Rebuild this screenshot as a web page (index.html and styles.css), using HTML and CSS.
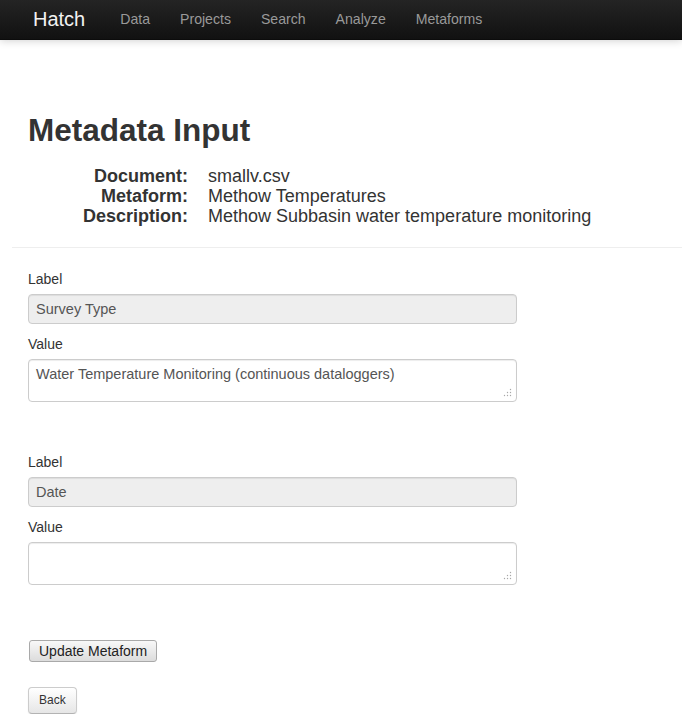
FILE: index.html
```html
<!DOCTYPE html>
<html>
<head>
<meta charset="utf-8">
<title>Hatch - Metadata Input</title>
<link rel="stylesheet" href="styles.css">
</head>
<body>
<header class="navbar">
  <a class="brand" href="#">Hatch</a>
  <nav class="nav">
    <a href="#">Data</a>
    <a href="#">Projects</a>
    <a href="#">Search</a>
    <a href="#">Analyze</a>
    <a href="#">Metaforms</a>
  </nav>
</header>
<main class="content">
  <h2 class="title">Metadata Input</h2>
  <dl class="meta">
    <dt>Document:</dt><dd>smallv.csv</dd>
    <dt>Metaform:</dt><dd>Methow Temperatures</dd>
    <dt>Description:</dt><dd>Methow Subbasin water temperature monitoring</dd>
  </dl>
  <hr class="divider">
  <form class="form">
    <div class="field-group">
      <label class="lbl">Label</label>
      <input class="inp" type="text" value="Survey Type" readonly>
      <label class="lbl">Value</label>
      <div class="txt-wrap">
        <textarea class="txt">Water Temperature Monitoring (continuous dataloggers)</textarea>
        <svg class="grip" width="9" height="9" viewBox="0 0 9 9"><circle cx="7.5" cy="1.5" r="0.7"/><circle cx="7.5" cy="4.5" r="0.7"/><circle cx="4.5" cy="4.5" r="0.7"/><circle cx="7.5" cy="7.5" r="0.7"/><circle cx="4.5" cy="7.5" r="0.7"/><circle cx="1.5" cy="7.5" r="0.7"/></svg>
      </div>
    </div>
    <div class="field-group second">
      <label class="lbl">Label</label>
      <input class="inp" type="text" value="Date" readonly>
      <label class="lbl">Value</label>
      <div class="txt-wrap">
        <textarea class="txt"></textarea>
        <svg class="grip" width="9" height="9" viewBox="0 0 9 9"><circle cx="7.5" cy="1.5" r="0.7"/><circle cx="7.5" cy="4.5" r="0.7"/><circle cx="4.5" cy="4.5" r="0.7"/><circle cx="7.5" cy="7.5" r="0.7"/><circle cx="4.5" cy="7.5" r="0.7"/><circle cx="1.5" cy="7.5" r="0.7"/></svg>
      </div>
    </div>
    <div class="actions">
      <button type="button" class="btn-update">Update Metaform</button>
    </div>
  </form>
  <div class="back-row">
    <button type="button" class="btn-back">Back</button>
  </div>
</main>
</body>
</html>
```
FILE: styles.css
```css
* { box-sizing: border-box; }
html, body { margin: 0; padding: 0; background: #fff; }
body {
  font-family: "Liberation Sans", Arial, Helvetica, sans-serif;
  font-size: 14px;
  line-height: 20px;
  color: #333;
}
.navbar {
  height: 40px;
  display: flex;
  align-items: center;
  background: linear-gradient(to bottom, #242424, #111111);
  border-bottom: 1px solid #0c0c0c;
  box-shadow: 0 1px 8px rgba(0,0,0,0.18);
  padding-left: 13px;
}
.brand {
  font-size: 20px;
  line-height: 20px;
  color: #f2f2f2;
  text-decoration: none;
  padding: 10px 20px 10px 20px;
  margin-top: -2px;
}
.nav { display: flex; }
.nav a {
  color: #999;
  text-decoration: none;
  font-size: 14.1px;
  padding: 10px 15px;
  line-height: 20px;
  margin-top: -2px;
}
.content { padding-left: 28px; }
.title {
  margin: 70px 0 16px 0;
  font-size: 31.5px;
  line-height: 40px;
  font-weight: bold;
  color: #333;
}
.meta {
  margin: 0;
  display: grid;
  grid-template-columns: 160px auto;
  column-gap: 20px;
  font-size: 18px;
  line-height: 20px;
}
.meta dt {
  font-weight: bold;
  text-align: right;
  color: #333;
}
.meta dd { margin: 0; color: #333; }
.divider {
  margin: 21px 0 20px -16px;
  border: 0;
  border-top: 1px solid #eee;
  border-bottom: 1px solid #fff;
  height: 0;
}
.form { margin: 0; }
.field-group { display: flex; flex-direction: column; width: 489px; }
.field-group.second { margin-top: 50px; }
.lbl {
  display: block;
  line-height: 20px;
  margin-bottom: 5px;
  color: #333;
}
.inp {
  display: block;
  width: 489px;
  height: 30px;
  padding: 4px 7px;
  font-family: inherit;
  font-size: 14.5px;
  line-height: 20px;
  color: #555;
  background: #eee;
  border: 1px solid #ccc;
  border-radius: 4px;
  box-shadow: inset 0 1px 1px rgba(0,0,0,0.075);
  margin: 0 0 10px 0;
  outline: none;
}
.txt-wrap { position: relative; width: 489px; height: 43px; }
.txt {
  display: block;
  width: 489px;
  height: 43px;
  padding: 4px 7px;
  font-family: inherit;
  font-size: 14.5px;
  line-height: 20px;
  color: #555;
  background: #fff;
  border: 1px solid #ccc;
  border-radius: 4px;
  box-shadow: inset 0 1px 1px rgba(0,0,0,0.075);
  margin: 0;
  resize: none;
}
.grip {
  position: absolute;
  right: 5px;
  bottom: 5px;
  fill: #a8a8a8;
  pointer-events: none;
}
.actions { margin-top: 55px; padding-left: 1px; }
.btn-update {
  font-family: inherit;
  font-size: 14px;
  line-height: 16px;
  padding: 2px 9px;
  color: #222;
  background: linear-gradient(to bottom, #f8f8f8, #dcdcdc);
  border: 1px solid #a9a9a9;
  border-radius: 3px;
  cursor: pointer;
}
.back-row { margin-top: 25px; }
.btn-back {
  font-family: inherit;
  font-size: 12px;
  line-height: 17px;
  padding: 4px 10px;
  color: #333;
  background: linear-gradient(to bottom, #ffffff, #e6e6e6);
  border: 1px solid #ccc;
  border-bottom-color: #b3b3b3;
  border-radius: 4px;
  box-shadow: inset 0 1px 0 rgba(255,255,255,0.2), 0 1px 2px rgba(0,0,0,0.05);
  cursor: pointer;
}
```
